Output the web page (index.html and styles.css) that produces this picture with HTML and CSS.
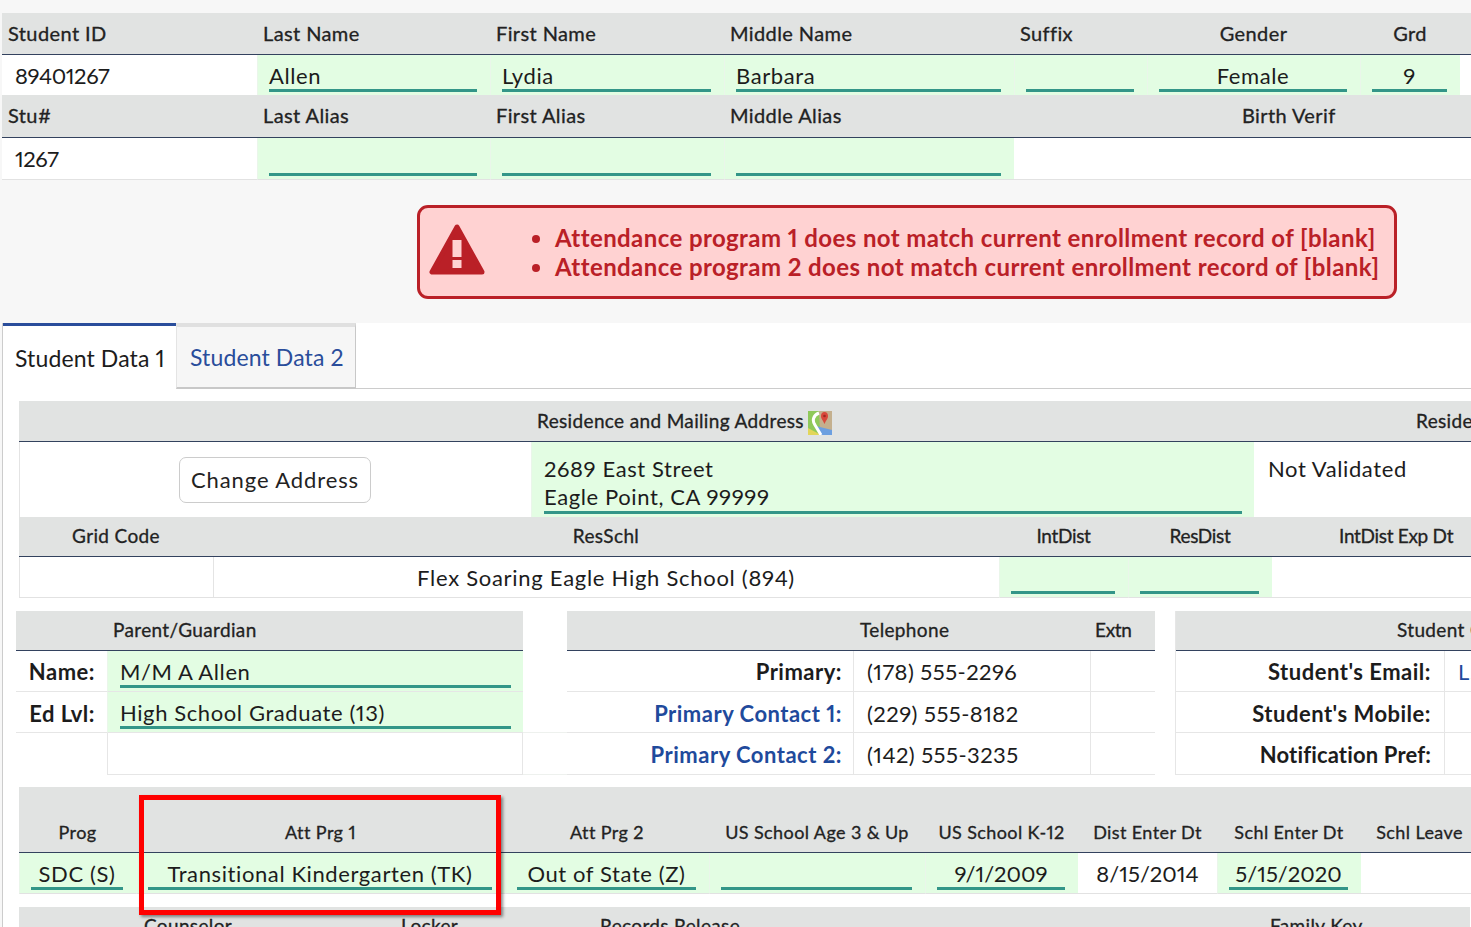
FILE: index.html
```html
<!DOCTYPE html>
<html lang="en">
<head>
<meta charset="utf-8">
<title>Student Data</title>
<link rel="stylesheet" href="styles.css">
</head>
<body>
<section class="grid top">
  <div class="hd">Student ID</div><div class="hd">Last Name</div><div class="hd">First Name</div><div class="hd">Middle Name</div><div class="hd">Suffix</div><div class="hd ctr">Gender</div><div class="hd ctr">Grd</div><div class="hd"></div>
  <div class="val plain idnum">89401267</div><div class="val green"><span class="field">Allen</span></div><div class="val green"><span class="field">Lydia</span></div><div class="val green"><span class="field">Barbara</span></div><div class="val green"><span class="field"></span></div><div class="val green"><span class="field mid">Female</span></div><div class="val green"><span class="field mid">9</span></div><div class="val plain"></div>
  <div class="hd">Stu#</div><div class="hd">Last Alias</div><div class="hd">First Alias</div><div class="hd">Middle Alias</div><div class="hd birth">Birth Verif</div>
  <div class="val plain last idnum">1267</div><div class="val green last"><span class="field"></span></div><div class="val green last"><span class="field"></span></div><div class="val green last"><span class="field"></span></div><div class="val plain last fill"></div>
</section>

<section class="alert">
  <svg class="warn" viewBox="0 0 56 52" aria-hidden="true"><path class="warn-tri" d="M28 3 L3 48 H53 Z"/><rect class="warn-cut" x="23.500" y="16" width="9" height="17"/><rect class="warn-cut" x="23.500" y="36" width="9" height="8"/></svg>
  <ul class="msgs">
    <li>Attendance program 1 does not match current enrollment record of [blank]</li>
    <li>Attendance program 2 does not match current enrollment record of [blank]</li>
  </ul>
</section>

<main class="panel">
  <nav class="tabs">
    <div class="tab active">Student Data 1</div>
    <div class="tab other">Student Data 2</div>
  </nav>

  <section class="grid addr1">
    <div class="hd small addr-title">Residence and Mailing Address
      <svg class="map" viewBox="0 0 24 24" aria-hidden="true"><rect width="24" height="24" fill="#8fc95a"/><path d="M11 0H24V20H12Z" fill="#c4b08e"/><path d="M0 17L13 24H0Z" fill="#e2d65a"/><path d="M8 15L24 19V24H12Z" fill="#6c9fe0"/><path d="M11 2C5 4 4 10 7 14L13 24" fill="none" stroke="#fff" stroke-width="3"/><path d="M16.500 1C14 1 13 3 13 5C13 8 15 9 16.500 13C18 9 20 8 20 5C20 3 19 1 16.500 1Z" fill="#d9483b"/><circle cx="16.500" cy="5" r="1.300" fill="#9c2a22"/></svg>
    </div>
    <div class="hd small addr-side">Residence Validation</div>
    <div class="val plain btn-cell edge"><button class="btn" type="button">Change Address</button></div>
    <div class="val green tall"><span class="field multi">2689 East Street<br>Eagle Point, CA 99999</span></div>
    <div class="val plain notval">Not Validated</div>
  </section>
  <section class="grid addr2">
    <div class="hd small ctr">Grid Code</div><div class="hd small ctr">ResSchl</div><div class="hd small ctr tight">IntDist</div><div class="hd small ctr tight">ResDist</div><div class="hd small exp tight">IntDist Exp Dt</div>
    <div class="val plain last edge"></div><div class="val plain last ctr school edge">Flex Soaring Eagle High School (894)</div><div class="val green last"><span class="field"></span></div><div class="val green last"><span class="field"></span></div><div class="val plain last"></div>
  </section>

  <div class="contacts">
    <section class="grid parent">
      <div class="hd small span pg">Parent/Guardian</div>
      <div class="lbl">Name:</div><div class="val green line"><span class="field">M/M A Allen</span></div>
      <div class="lbl lower">Ed Lvl:</div><div class="val green line"><span class="field">High School Graduate (13)</span></div>
      <div class="lbl blank"></div><div class="val plain box"></div>
    </section>
    <div class="gutter"><div class="gutter-line"></div></div>
    <section class="grid phone">
      <div class="hd small span-2 tel">Telephone</div><div class="hd small extn tight">Extn</div>
      <div class="lbl">Primary:</div><div class="val plain line sep tel-num">(178) 555-2296</div><div class="val plain line sep"></div>
      <div class="lbl link lower">Primary Contact 1:</div><div class="val plain line sep tel-num lower">(229) 555-8182</div><div class="val plain line sep"></div>
      <div class="lbl link lower">Primary Contact 2:</div><div class="val plain line sep tel-num lower">(142) 555-3235</div><div class="val plain line sep"></div>
    </section>
    <section class="grid student">
      <div class="hd small span stu">Student Contact</div>
      <div class="lbl">Student's Email:</div><div class="val plain line sep email">L.Allen@example.org</div>
      <div class="lbl lower">Student's Mobile:</div><div class="val plain line sep"></div>
      <div class="lbl lower pref">Notification Pref:</div><div class="val plain line sep"></div>
    </section>
  </div>

  <section class="grid prog">
    <div class="hd small low">Prog</div><div class="hd small low">Att Prg 1</div><div class="hd small low">Att Prg 2</div><div class="hd small low">US School Age 3 &amp; Up</div><div class="hd small low">US School K-12</div><div class="hd small low">Dist Enter Dt</div><div class="hd small low">Schl Enter Dt</div><div class="hd small low">Schl Leave</div>
    <div class="val green last"><span class="field mid">SDC (S)</span></div><div class="val green last"><span class="field mid">Transitional Kindergarten (TK)</span></div><div class="val green last"><span class="field mid">Out of State (Z)</span></div><div class="val green last"><span class="field mid"></span></div><div class="val green last"><span class="field mid num">9/1/2009</span></div><div class="val plain last ctr num">8/15/2014</div><div class="val green last"><span class="field mid num">5/15/2020</span></div><div class="val plain last"></div>
  </section>

  <section class="grid bottom">
    <div class="hd small bt c1">Counselor</div><div class="hd small bt">Locker</div><div class="hd small bt">Records Release</div><div class="hd small bt">Family Key</div>
  </section>

  <div class="callout"></div>
</main>
</body>
</html>
```

FILE: styles.css
```css
* { box-sizing: border-box; }
html, body { margin: 0; height: 927px; overflow: hidden; }
body {
  width: 1471px;
  background: #f7f7f7;
  color: #1c1c1c;
  font-family: Lato, "Noto Sans", sans-serif;
  font-size: 22px;
  letter-spacing: .6px;
  font-variant-numeric: proportional-nums;
  padding-top: 13px;
}
.grid { display: grid; }
.top {
  margin-left: 2px;
  grid-template-columns: 255px 233px 234px 290px 133px 213px 100px 11px;
  grid-template-rows: 42px 40px 43px 42px;
}
.hd {
  background: #e1e3e2;
  border-bottom: 1px solid #33425e;
  font-size: 20px;
  letter-spacing: .4px;
  -webkit-text-stroke: .3px #222;
  padding: 0 6px 2px;
  display: flex;
  align-items: center;
  white-space: nowrap;
  color: #222;
}
.hd.small { font-size: 19px; letter-spacing: .35px; }
.hd.small.tight { letter-spacing: -.3px; }
.hd.ctr, .val.ctr { justify-content: center; }
.birth { grid-column: 5 / -1; padding-left: 228px; }
.val {
  display: flex;
  align-items: center;
  padding: 0 13px;
  white-space: nowrap;
  min-width: 0;
}
.num { letter-spacing: 0; }
.idnum { letter-spacing: -.4px; }
.tel-num { letter-spacing: .45px; }
.plain { background: #fff; }
.edge { box-shadow: inset 1px 0 #e4e4e4; }
.green { background: #e3fde3; padding: 0 13px 3px 11px; align-items: stretch; border-left: 1px solid #eaf6ea; }
.last { border-bottom: 1px solid #e2e2e2; }
.fill { grid-column: 5 / -1; }
.field {
  flex: 1;
  display: flex;
  align-items: flex-end;
  border-bottom: 3px solid #339688;
  line-height: 26px;
  min-width: 0;
}
.field.mid { justify-content: center; }
.field.multi { display: block; margin-top: 13px; line-height: 28px; }

.alert {
  margin: 25px 0 24px 417px;
  width: 980px;
  height: 94px;
  background: #ffd2d2;
  border: 3px solid #ba2027;
  border-radius: 11px;
  display: flex;
  align-items: center;
  color: #ba2027;
  padding-left: 9px;
}
.warn { width: 56px; height: 52px; flex: none; margin-top: -4px; }
.warn-tri { fill: #ba2027; stroke: #ba2027; stroke-width: 5; stroke-linejoin: round; }
.warn-cut { fill: #ffd2d2; }
.msgs { margin: 0; padding: 0 0 0 70px; font-size: 24px; font-weight: 700; letter-spacing: .41px; line-height: 29px; white-space: nowrap; }

.panel {
  position: relative;
  margin-left: 2px;
  height: 604px;
  background: #fff;
  border-left: 1px solid #ccc;
}
.tabs {
  display: flex;
  height: 66px;
  border-bottom: 1px solid #ccc;
}
.tab { display: flex; align-items: center; font-size: 23px; letter-spacing: .12px; }
.active { width: 173px; padding-left: 12px; border-top: 3px solid #2a4d9b; background: #fff; margin-bottom: -1px; }
.other {
  width: 180px;
  padding-left: 13px;
  color: #2a4d9b;
  background: #f6f6f6;
  border-top: 4px solid #e0e0e0;
  border-right: 1px solid #c8c8c8;
  border-bottom: 2px solid #c8c8c8;
  border-left: 1px solid #e4e4e4;
  margin-bottom: -1px;
}
.addr1 {
  margin: 12px 0 0 16px;
  grid-template-columns: 512px 723px 300px;
  grid-template-rows: 41px 75px;
}
.addr-title { grid-column: 1 / 3; padding-left: 518px; gap: 4px; }
.addr-side { padding-left: 162px; }
.map { width: 24px; height: 24px; flex: none; margin-top: 6px; }
.btn-cell { justify-content: center; }
.btn {
  font: inherit;
  letter-spacing: .9px;
  color: #222;
  background: #fff;
  border: 1px solid #ccc;
  border-radius: 7px;
  width: 192px;
  height: 46px;
  padding: 0;
}
.tall { padding: 0 12px 3px 12px; }
.notval { align-items: flex-start; padding: 13px 13px 0 14px; line-height: 28px; }
.addr2 {
  margin-left: 16px;
  grid-template-columns: 194px 786px 129px 144px 300px;
  grid-template-rows: 40px 41px;
}
.exp { padding-left: 67px; }
.school { letter-spacing: .72px; }

.contacts { display: flex; margin: 13px 0 0 13px; height: 164px; }
.parent, .phone, .student { flex: none; grid-template-rows: 40px 41px 41px 42px; }
.parent { width: 507px; grid-template-columns: 91px 416px; }
.parent .green { padding: 0 12px 3px 12px; }
.span { grid-column: 1 / -1; }
.span-2 { grid-column: 1 / 3; }
.pg { padding-left: 97px; }
.lbl {
  background: #fff;
  border-bottom: 1px solid #e6e6e6;
  display: flex;
  align-items: center;
  justify-content: flex-end;
  padding-right: 12px;
  font-weight: 700;
  letter-spacing: .5px;
  white-space: nowrap;
}
.pref { letter-spacing: .15px; }
.lower { padding-top: 2px; }
.link { color: #1f4a9c; }
.blank { border-bottom: 0; }
.line { border-bottom: 1px solid #e6e6e6; }
.box { border: 1px solid #e6e6e6; border-top: 0; }
.sep { border-left: 1px solid #e6e6e6; }
.gutter { flex: none; width: 44px; height: 164px; background: #fff; padding-top: 121px; border-bottom: 1px solid #eef1ee; }
.gutter-line { border-top: 1px solid #eef1ee; }
.phone { width: 588px; grid-template-columns: 286px 237px 65px; border-right: 1px solid #e6e6e6; }
.phone .lbl { padding-right: 11px; }
.tel { padding-left: 293px; }
.extn { padding-left: 5px; }
.student { margin-left: 20px; width: 400px; grid-template-columns: 268px 132px; border-left: 1px solid #e6e6e6; }
.student .lbl { padding-right: 13px; }
.stu { padding-left: 221px; }
.email { color: #1f4a9c; }

.prog {
  margin: 12px 0 0 16px;
  grid-template-columns: 117px 369px 204px 216px 153px 139px 144px 117px;
  grid-template-rows: 66px 41px;
}
.hd.low { font-size: 18px; letter-spacing: .4px; justify-content: center; padding: 25px 0 0; }
.bottom {
  margin: 13px 0 0 16px;
  height: 30px;
  grid-template-columns: 382px 199px 670px 200px;
}
.hd.bt { align-items: flex-start; border-bottom: 0; padding: 7px 0 0; }
.hd.c1 { padding-left: 125px; }

.callout {
  position: absolute;
  left: 136px;
  top: 472px;
  width: 362px;
  height: 120px;
  border: 5px solid #f00;
  box-shadow: 2px 2px 3px rgba(0,0,0,.45);
}
```
